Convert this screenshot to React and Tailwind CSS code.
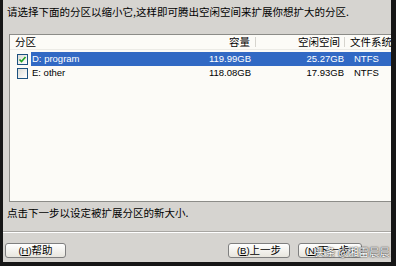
import React from 'react';

const cjk = { fontFamily: '"Noto Sans CJK SC", "Noto Sans", sans-serif' };
const lat = { fontFamily: '"Liberation Sans", "Noto Sans CJK SC", sans-serif' };

const rows = [
  { name: 'D: program', size: '119.99GB', free: '25.27GB', fs: 'NTFS', checked: true, selected: true },
  { name: 'E: other', size: '118.08GB', free: '17.93GB', fs: 'NTFS', checked: false, selected: false },
];

const Checkbox = ({ checked }) => (
  <div className="w-[11px] h-[11px] shrink-0 border border-[#1c5180] bg-gradient-to-br from-[#dcdcd7] to-[#ffffff] flex items-center justify-center">
    {checked && (
      <svg width="9" height="9" viewBox="0 0 9 9" className="block">
        <path d="M1.5 4.5 L3.5 6.5 L7.5 2" stroke="#21a121" strokeWidth="1.6" fill="none" />
      </svg>
    )}
  </div>
);

const Button = ({ k, label, className }) => (
  <button
    className={`h-[15px] rounded-[3px] border border-[#7f7f7f] bg-gradient-to-b from-[#ffffff] to-[#e8e6de] text-[10.5px] leading-none text-black flex items-center justify-center shrink-0 ${className}`}
    style={cjk}
  >
    <span style={lat} className="text-[9.5px]">(<span className="underline">{k}</span>)</span>
    {label}
  </button>
);

export default function App() {
  return (
    <div className="w-[396px] h-[266px] bg-[#161616] flex overflow-hidden">
      <div className="ml-[3px] w-[388px] h-[262px] shrink-0 bg-[#d6d4d0] flex flex-col relative">
        <p className="pl-[4px] pt-[5px] text-[10.5px] leading-[13px] text-black whitespace-nowrap" style={cjk}>
          请选择下面的分区以缩小它,这样即可腾出空闲空间来扩展你想扩大的分区.
        </p>

        <div className="ml-[6px] mt-[16px] h-[168px] border-l border-t border-b border-[#8c8c88] bg-[#fcfbf7] overflow-hidden">
          <div className="flex h-[15px] items-center text-[10.5px] text-black border-b border-[#ecebe6] whitespace-nowrap" style={cjk}>
            <div className="w-[160px] shrink-0 pl-[5px] leading-none">分区</div>
            <div className="w-[86px] shrink-0 pr-[5px] text-right leading-none border-r border-[#d6d4ce]">容量</div>
            <div className="w-[89px] shrink-0 pr-[4px] text-right leading-none border-r border-[#d6d4ce]">空闲空间</div>
            <div className="shrink-0 pl-[5px] leading-none">文件系统</div>
          </div>
          <div className="pt-[2px]">
            {rows.map((r) => (
              <div key={r.name} className="flex h-[14px] items-center text-[9.5px] whitespace-nowrap" style={lat}>
                <div className="w-[21px] shrink-0 pl-[7px] flex items-center">
                  <Checkbox checked={r.checked} />
                </div>
                <div
                  className={`flex-1 flex h-full items-center ${
                    r.selected ? 'bg-[#3169c4] text-white' : 'text-black'
                  }`}
                >
                  <div className="w-[150px] shrink-0 pl-[1px]">{r.name}</div>
                  <div className="w-[75px] shrink-0 text-right pr-[5px]">{r.size}</div>
                  <div className="w-[89px] shrink-0 text-right pr-[1px]">{r.free}</div>
                  <div className="shrink-0 pl-[9px]">{r.fs}</div>
                </div>
              </div>
            ))}
          </div>
        </div>

        <p className="pl-[4px] pt-[4px] text-[10.5px] leading-[13px] text-black whitespace-nowrap" style={cjk}>
          点击下一步以设定被扩展分区的新大小.
        </p>

        <div className="mt-[12px] border-t border-[#a8a6a2] border-b-white border-b h-0" />

        <div className="flex items-center mt-[10px]">
          <Button k="H" label="帮助" className="ml-[2px] w-[61px]" />
          <Button k="B" label="上一步" className="ml-[162px] w-[62px]" />
          <Button k="N" label="下一步>" className="ml-[8px] w-[64px]" />
        </div>

        <div
          className="absolute right-[1px] bottom-[5px] text-[10.5px] leading-none text-white whitespace-nowrap [text-shadow:0_0_1px_#222,0_0_2px_#444]"
          style={cjk}
        >
          头条 @湘雷晨晨
        </div>
      </div>
    </div>
  );
}
